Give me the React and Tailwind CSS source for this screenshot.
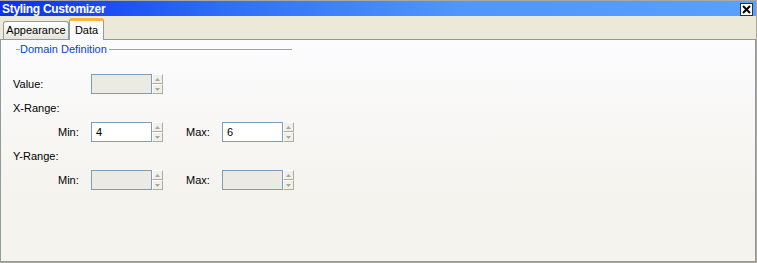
import React from "react";

function Spinner() {
  return (
    <div className="flex flex-col w-[11px] h-[20px]">
      <div className="h-[10px] w-[11px] bg-[#f1f0ea] border border-t-white border-l-white border-r-[#aeaca0] border-b-[#aeaca0] flex items-center justify-center">
        <svg width="5" height="3" viewBox="0 0 5 3"><path d="M2.5 0 L5 3 L0 3 Z" fill="#aaa89e" /></svg>
      </div>
      <div className="h-[10px] w-[11px] bg-[#f1f0ea] border border-t-white border-l-white border-r-[#aeaca0] border-b-[#aeaca0] flex items-center justify-center">
        <svg width="5" height="3" viewBox="0 0 5 3"><path d="M0 0 L5 0 L2.5 3 Z" fill="#aaa89e" /></svg>
      </div>
    </div>
  );
}

function Field({ value, disabled }) {
  return (
    <div className="flex">
      <div
        className={
          "w-[61px] h-[20px] border border-[#7f9db9] flex items-center pl-[4px] text-[11px] leading-[13px] text-black " +
          (disabled ? "bg-[#ebeae3]" : "bg-white")
        }
      >
        {value}
      </div>
      <Spinner />
    </div>
  );
}

export default function App() {
  return (
    <div className="w-[757px] h-[263px] bg-[#ece9d8] flex flex-col overflow-hidden border-b border-r border-[#aca899] font-['Liberation_Sans',Arial,sans-serif] text-[11px] leading-[13px] text-black">
      {/* Title bar */}
      <div className="h-[16px] shrink-0 border-t border-[#a8a8a8] bg-[linear-gradient(to_right,#0a2ff0,#2f6ff6_30%,#4f95fb_60%,#5aa0ff)] flex items-center justify-between pl-[2px] pr-[3px]">
        <span className="text-white font-bold text-[12px] leading-[14px] tracking-[-0.3px]">Styling Customizer</span>
        <div className="w-[13px] h-[13px] mt-[1px] bg-white border border-[#303030] flex items-center justify-center">
          <svg width="9" height="9" viewBox="0 0 9 9">
            <path d="M1 1 L8 8 M8 1 L1 8" stroke="#000" strokeWidth="2" />
          </svg>
        </div>
      </div>

      {/* Tab strip */}
      <div className="h-[23px] shrink-0 flex items-end pl-[3px]">
        <div className="h-[18px] w-[66px] border border-b-0 border-[#919b9c] rounded-t-[3px] bg-[linear-gradient(to_bottom,#fefefe,#f0efe9_60%,#e5e3da)] flex items-center justify-center">
          Appearance
        </div>
        <div className="relative z-10 -mb-px h-[22px] w-[35px] border border-b-0 border-[#919b9c] border-t-[3px] border-t-[#f7b543] rounded-t-[3px] bg-[#fcfcfe] flex items-center justify-center pb-[1px]">
          Data
        </div>
      </div>

      {/* Panel */}
      <div className="flex-1 border border-[#919b9c] bg-[linear-gradient(to_bottom,#fcfcfe,#f4f3ee_70%,#f4f3ee)] flex flex-col">
        {/* Group header */}
        <div className="mt-[3px] ml-[15px] w-[276px] flex items-center h-[13px]">
          <div className="w-[4px] h-px bg-[#a3a3a3]" />
          <span className="text-[#0046d5]">Domain Definition</span>
          <div className="flex-1 ml-[2px] h-px bg-[#a3a3a3]" />
        </div>

        {/* Value row */}
        <div className="mt-[18px] ml-[12px] flex items-center h-[20px]">
          <div className="w-[78px]">Value:</div>
          <Field value="" disabled />
        </div>

        <div className="mt-[8px] ml-[12px] h-[13px]">X-Range:</div>

        <div className="mt-[7px] ml-[12px] flex items-center h-[20px]">
          <div className="w-[78px] pl-[45px]">Min:</div>
          <Field value="4" />
          <div className="ml-[23px] w-[36px]">Max:</div>
          <Field value="6" />
        </div>

        <div className="mt-[8px] ml-[12px] h-[13px]">Y-Range:</div>

        <div className="mt-[7px] ml-[12px] flex items-center h-[20px]">
          <div className="w-[78px] pl-[45px]">Min:</div>
          <Field value="" disabled />
          <div className="ml-[23px] w-[36px]">Max:</div>
          <Field value="" disabled />
        </div>
      </div>
    </div>
  );
}
